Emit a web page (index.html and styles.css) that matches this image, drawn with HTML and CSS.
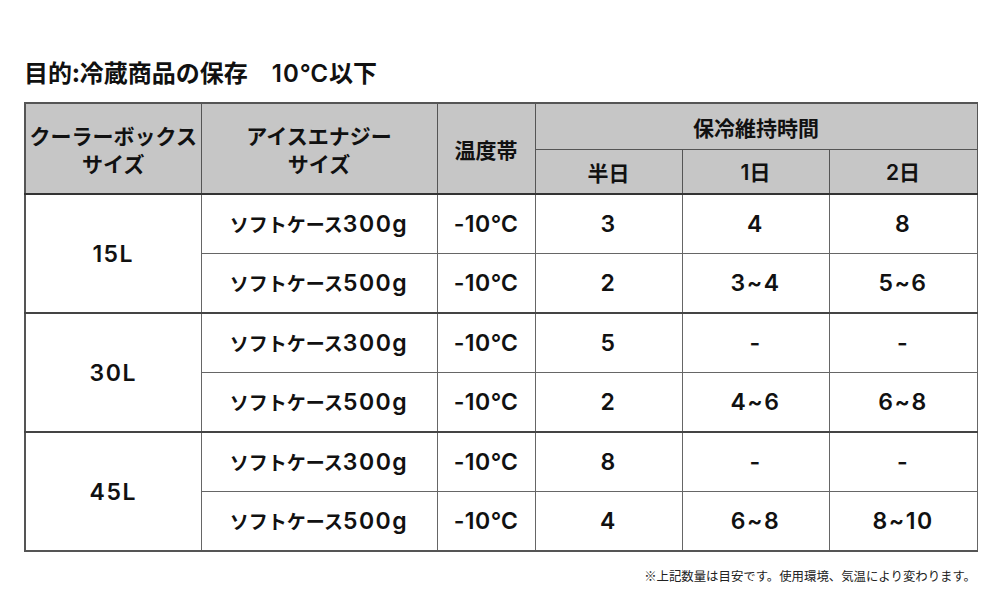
FILE: index.html
```html
<!DOCTYPE html>
<html lang="ja">
<head>
<meta charset="utf-8">
<link rel="stylesheet" href="styles.css">
</head>
<body>
<div class="page">
  <h1 class="title">目的:冷蔵商品の保存　<span class="n">10℃</span>以下</h1>
  <table class="grid">
    <colgroup>
      <col class="c1"><col class="c2"><col class="c3"><col class="c4"><col class="c5"><col class="c6">
    </colgroup>
    <thead>
      <tr class="h1">
        <th rowspan="2">クーラーボックス<br>サイズ</th>
        <th rowspan="2">アイスエナジー<br>サイズ</th>
        <th rowspan="2">温度帯</th>
        <th colspan="3">保冷維持時間</th>
      </tr>
      <tr class="h2">
        <th>半日</th><th><span class="n">1</span>日</th><th><span class="n">2</span>日</th>
      </tr>
    </thead>
    <tbody>
      <tr class="grp"><td rowspan="2" class="n">15L</td><td>ソフトケース<span class="n">300g</span></td><td><span class="n t">-10℃</span></td><td class="n">3</td><td class="n">4</td><td class="n">8</td></tr>
      <tr><td>ソフトケース<span class="n">500g</span></td><td><span class="n t">-10℃</span></td><td class="n">2</td><td class="n">3~4</td><td class="n">5~6</td></tr>
      <tr class="grp"><td rowspan="2" class="n">30L</td><td>ソフトケース<span class="n">300g</span></td><td><span class="n t">-10℃</span></td><td class="n">5</td><td class="n">-</td><td class="n">-</td></tr>
      <tr><td>ソフトケース<span class="n">500g</span></td><td><span class="n t">-10℃</span></td><td class="n">2</td><td class="n">4~6</td><td class="n">6~8</td></tr>
      <tr class="grp"><td rowspan="2" class="n">45L</td><td>ソフトケース<span class="n">300g</span></td><td><span class="n t">-10℃</span></td><td class="n">8</td><td class="n">-</td><td class="n">-</td></tr>
      <tr><td>ソフトケース<span class="n">500g</span></td><td><span class="n t">-10℃</span></td><td class="n">4</td><td class="n">6~8</td><td class="n">8~10</td></tr>
    </tbody>
  </table>
  <p class="note">※上記数量は目安です。使用環境、気温により変わります。</p>
</div>
</body>
</html>
```

FILE: styles.css
```css
html, body {
  margin: 0;
  padding: 0;
  background: #fff;
}
body {
  font-family: "Noto Sans CJK JP", "Noto Sans", sans-serif;
  color: #111;
}
.page {
  width: 952px;
  padding: 56px 0 0 24px;
}
.title {
  margin: 0 0 12px 0;
  font-size: 24px;
  line-height: 32px;
  font-weight: 700;
}
.n {
  font-family: "Inter", "Noto Sans CJK JP", sans-serif;
  font-weight: 600;
  font-size: 23px;
  line-height: 28px;
  letter-spacing: 1.5px;
}
.title .n {
  font-size: 24px;
  line-height: 32px;
  letter-spacing: 1px;
}
.grid {
  width: 952px;
  border-collapse: collapse;
  table-layout: fixed;
  border: 2px solid #555;
  border-right: 1.5px solid #111;
}
.c1 { width: 176px; }
.c2 { width: 236px; }
.c3 { width: 98px; }
.c4 { width: 147px; }
.c5 { width: 147px; }
.c6 { width: 148px; }
.grid th, .grid td {
  border: 1px solid #666;
  text-align: center;
  vertical-align: middle;
  padding: 0;
  font-size: 19px;
  font-weight: 700;
  line-height: 28px;
}
.grid th {
  font-size: 21px;
  background: #c6c6c6;
  border-color: #555;
}
.grid td.n {
  font-family: "Inter", "Noto Sans CJK JP", sans-serif;
  font-weight: 600;
  font-size: 23px;
}
.grid th .n {
  font-size: 21px;
  letter-spacing: 0;
}
.grid .t {
  letter-spacing: 0.5px;
}
.h1 th { height: 45px; }
.h2 th { height: 43px; }
.grid thead tr:last-child th,
.grid thead tr:first-child th[rowspan] {
  border-bottom: 2px solid #333;
}
.grid td { height: 58px; }
.grp td { border-top: 2px solid #444; }
.note {
  margin: 16px 0 0 0;
  text-align: right;
  font-size: 12.4px;
  line-height: 16px;
  font-weight: 400;
  color: #222;
}
```
